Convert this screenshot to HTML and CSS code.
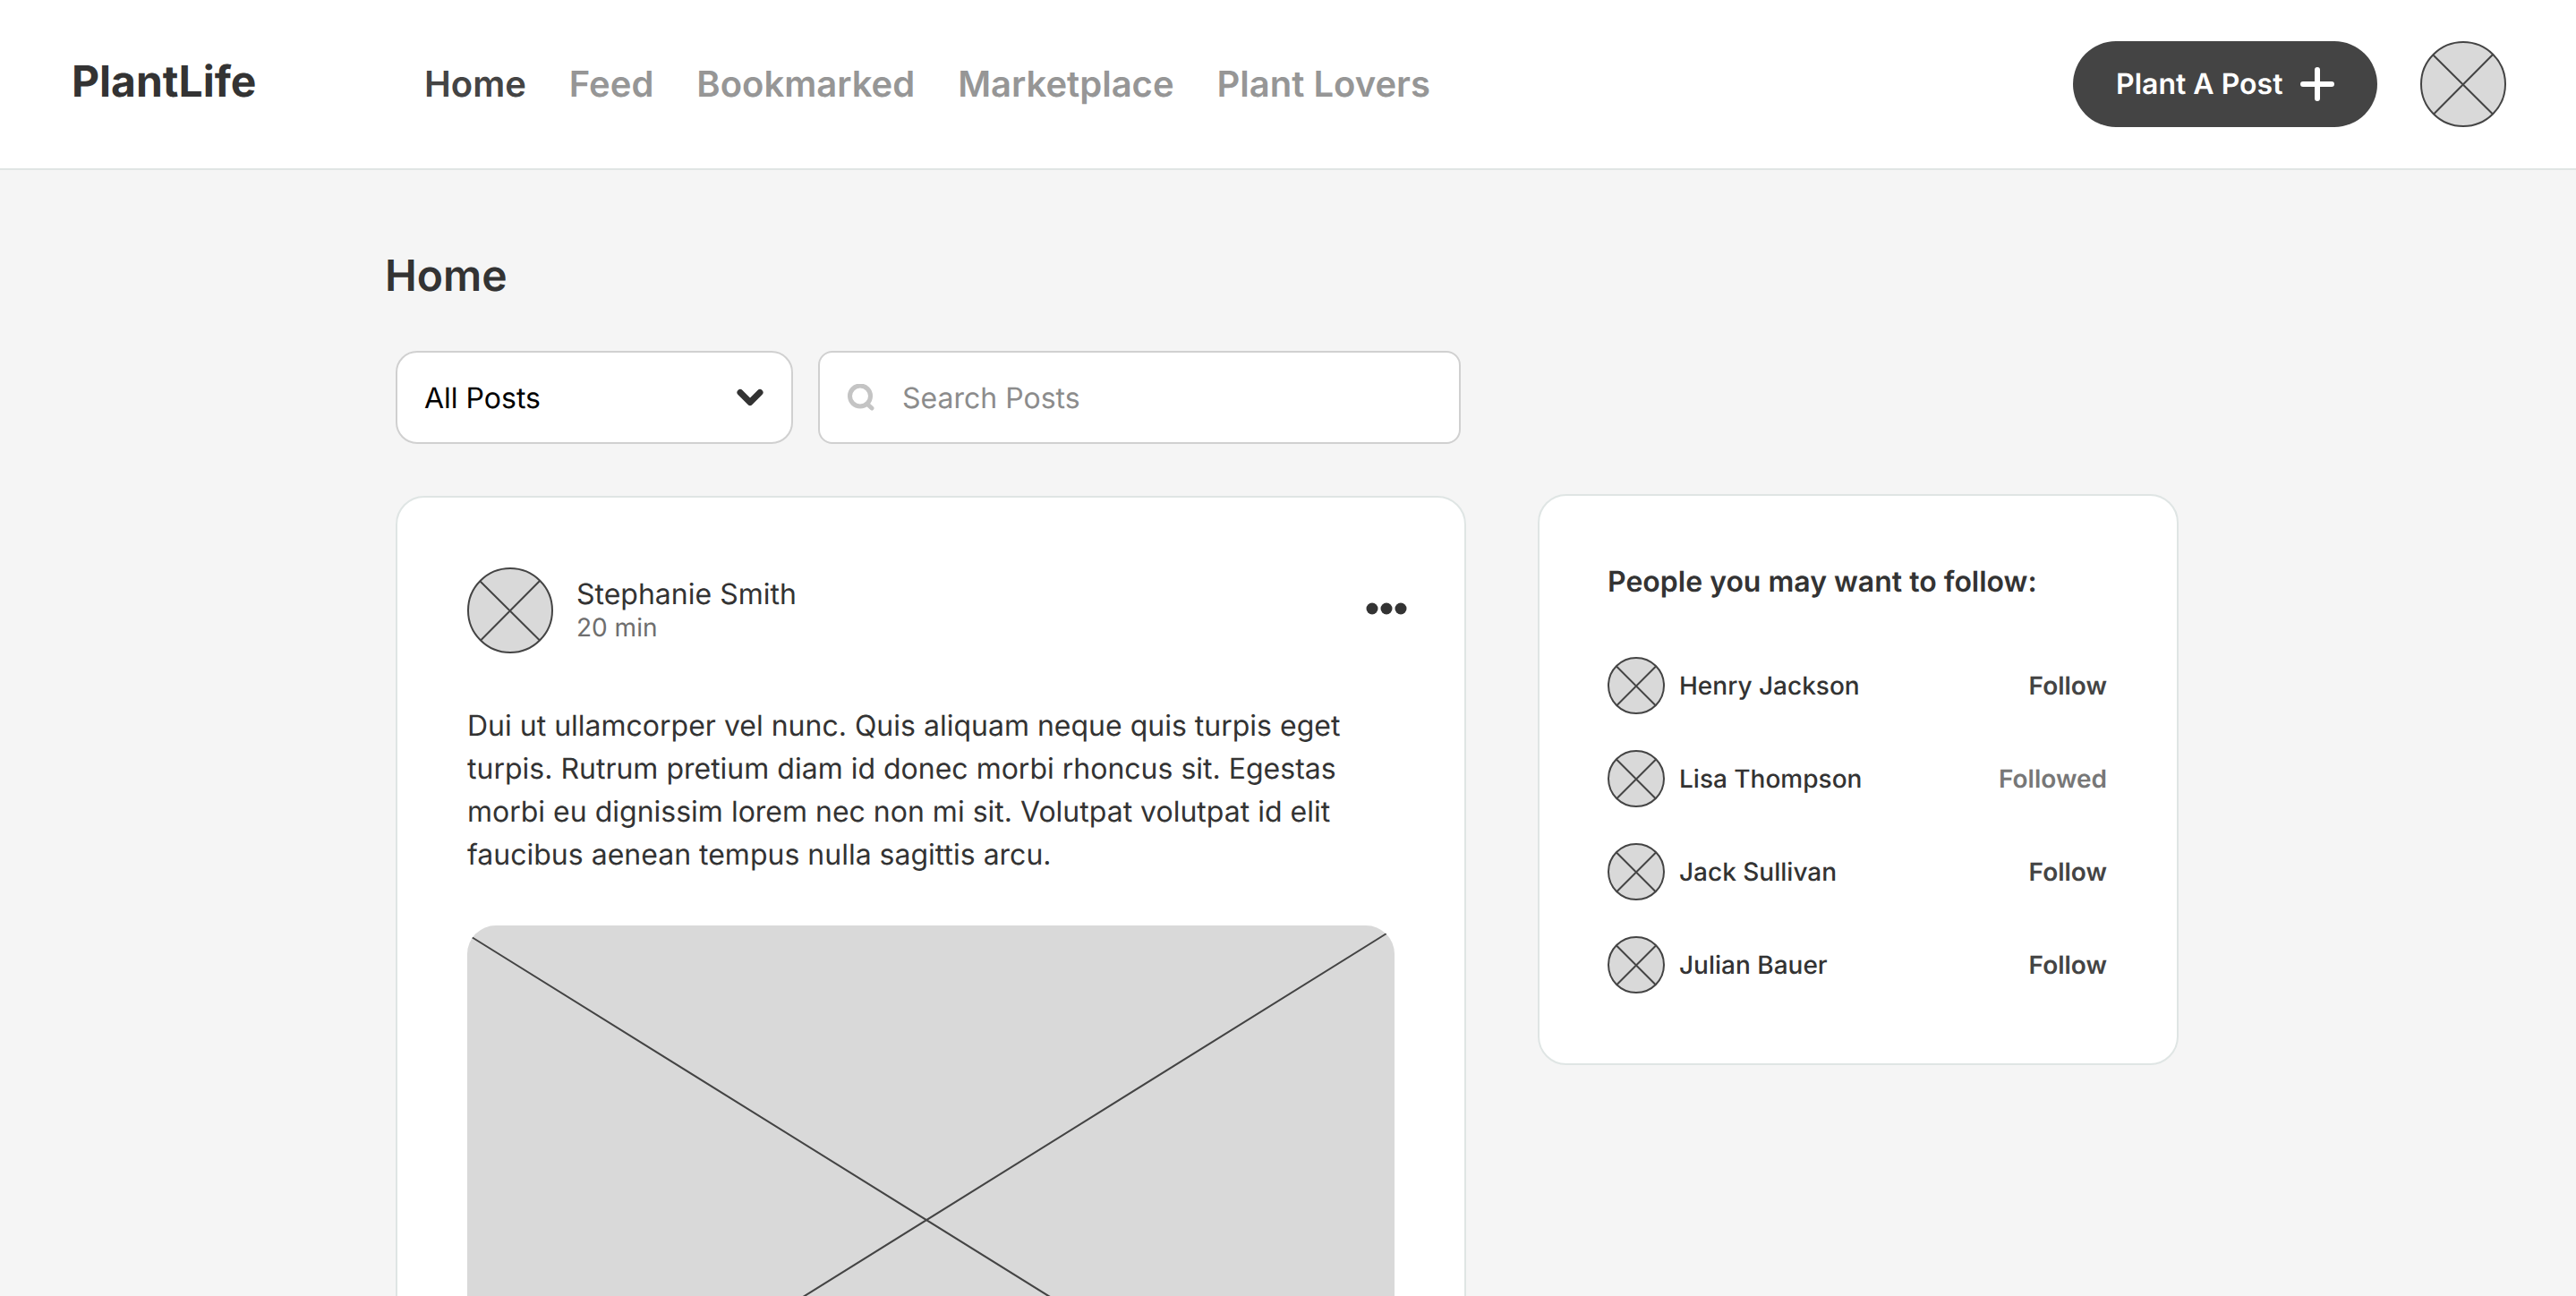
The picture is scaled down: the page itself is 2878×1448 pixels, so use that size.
FILE: index.html
```html
<!DOCTYPE html>
<html lang="en">
<head>
  <meta charset="utf-8">
  <meta name="viewport" content="width=device-width, initial-scale=1">
  <title>PlantLife – Home</title>
  <link rel="stylesheet" href="styles.css">
</head>
<body>
  <svg class="sprite" aria-hidden="true">
    <symbol id="avatar" viewBox="0 0 96 96">
      <circle cx="48" cy="48" r="47" />
      <path d="M14.500 15.500 81 81.500M81 15 15 81.500" />
    </symbol>
    <symbol id="avatar-small" viewBox="0 0 64 64">
      <circle cx="32" cy="32" r="31" />
      <path d="M10 10.500 54 54.500M54 10.500 10 54.500" />
    </symbol>
  </svg>

  <header class="topbar">
    <a class="logo" href="#">PlantLife</a>
    <nav class="nav" aria-label="Main">
      <a class="nav-link is-active" href="#" aria-current="page">Home</a>
      <a class="nav-link" href="#">Feed</a>
      <a class="nav-link" href="#">Bookmarked</a>
      <a class="nav-link" href="#">Marketplace</a>
      <a class="nav-link" href="#">Plant Lovers</a>
    </nav>
    <button class="post-button" type="button">
      Plant A Post
      <svg class="plus" viewBox="0 0 38 38" aria-hidden="true"><path d="M19 3V35M3 19H35" /></svg>
    </button>
    <a class="profile" href="#" aria-label="Your profile">
      <svg class="avatar"><use href="#avatar" /></svg>
    </a>
  </header>

  <main class="page">
    <h1 class="page-title">Home</h1>
    <div class="columns">
      <div class="feed">
        <form class="filters">
          <div class="filter-select">
            <select class="field" aria-label="Filter posts">
              <option>All Posts</option>
            </select>
            <svg class="chevron" viewBox="0 0 30 20" aria-hidden="true"><path d="M4 4.500 15 15.500 26 4.500" /></svg>
          </div>
          <div class="filter-search">
            <svg class="magnifier" viewBox="0 0 30 30" aria-hidden="true">
              <circle cx="14" cy="13.500" r="11.500" />
              <path d="M22 22.500 27 27" />
            </svg>
            <input class="field" type="search" placeholder="Search Posts" aria-label="Search posts">
          </div>
        </form>

        <article class="card post">
          <div class="post-header">
            <svg class="avatar" aria-hidden="true"><use href="#avatar" /></svg>
            <div class="byline">
              <h2 class="author">Stephanie Smith</h2>
              <p class="time">20 min</p>
            </div>
            <button class="more" type="button" aria-label="More options">
              <svg class="dots" viewBox="0 0 46 14" aria-hidden="true">
                <circle cx="7" cy="7" r="6.500" /><circle cx="23" cy="7" r="6.500" /><circle cx="39" cy="7" r="6.500" />
              </svg>
            </button>
          </div>
          <p class="post-text">Dui ut ullamcorper vel nunc. Quis aliquam neque quis turpis eget turpis. Rutrum pretium diam id donec morbi rhoncus sit. Egestas morbi eu dignissim lorem nec non mi sit. Volutpat volutpat id elit faucibus aenean tempus nulla sagittis arcu.</p>
          <svg class="post-image" viewBox="0 0 1036 656" role="img" aria-label="Post image">
            <path d="M5 13 1032 652M1027 9 6 645" />
          </svg>
        </article>
      </div>

      <aside class="card people">
        <h2 class="people-title">People you may want to follow:</h2>
        <ul class="people-list">
          <li class="person">
            <svg class="avatar-small" aria-hidden="true"><use href="#avatar-small" /></svg>
            <span class="person-name">Henry Jackson</span>
            <button class="follow" type="button">Follow</button>
          </li>
          <li class="person">
            <svg class="avatar-small" aria-hidden="true"><use href="#avatar-small" /></svg>
            <span class="person-name">Lisa Thompson</span>
            <button class="follow is-followed" type="button">Followed</button>
          </li>
          <li class="person">
            <svg class="avatar-small" aria-hidden="true"><use href="#avatar-small" /></svg>
            <span class="person-name">Jack Sullivan</span>
            <button class="follow" type="button">Follow</button>
          </li>
          <li class="person">
            <svg class="avatar-small" aria-hidden="true"><use href="#avatar-small" /></svg>
            <span class="person-name">Julian Bauer</span>
            <button class="follow" type="button">Follow</button>
          </li>
        </ul>
      </aside>
    </div>
  </main>
</body>
</html>
```
FILE: styles.css
```css
*,
*::before,
*::after {
  box-sizing: border-box;
}

body {
  margin: 0;
  background: #f5f5f5;
  color: #333;
  font-family: Inter, "Liberation Sans", sans-serif;
  font-size: 32px;
  line-height: 40px;
  text-rendering: geometricPrecision;
}

h1,
h2,
p,
ul {
  margin: 0;
  padding: 0;
}

a {
  color: inherit;
  text-decoration: none;
}

button {
  border: 0;
  padding: 0;
  background: none;
  color: inherit;
  font: inherit;
  text-rendering: inherit;
  cursor: pointer;
}

.sprite {
  display: none;
}

/* Top bar */

.topbar {
  display: flex;
  align-items: center;
  height: 190px;
  padding: 0 78px 0 80px;
  border-bottom: 2px solid #e0e5e4;
  background: #fff;
}

.logo {
  width: 394px;
  padding-bottom: 6px;
  font-size: 48px;
  font-weight: 700;
  line-height: 56px;
}

.nav {
  display: flex;
  flex: 1;
  gap: 48px;
  color: #969696;
  font-size: 40px;
  font-weight: 600;
  line-height: 48px;
}

.nav-link.is-active {
  color: #444;
}

.post-button {
  display: flex;
  align-items: center;
  justify-content: space-between;
  width: 340px;
  height: 96px;
  margin-right: 48px;
  padding: 0 48px;
  border-radius: 48px;
  background: #444;
  color: #fff;
  font-weight: 600;
}

.plus {
  width: 38px;
  height: 38px;
  fill: none;
  stroke: #fff;
  stroke-width: 6;
  stroke-linecap: round;
}

.profile {
  display: flex;
}

.avatar,
.avatar-small {
  flex: none;
  fill: #d9d9d9;
  stroke: #444;
  stroke-width: 2;
}

.avatar {
  width: 96px;
  height: 96px;
}

.avatar-small {
  width: 64px;
  height: 64px;
}

/* Page */

.page {
  max-width: 2018px;
  margin: 0 auto;
  padding-top: 90px;
}

.page-title {
  margin-bottom: 56px;
  font-size: 48px;
  font-weight: 600;
  line-height: 56px;
}

.columns {
  display: grid;
  grid-template-columns: minmax(0, 1fr) 716px;
  gap: 80px;
  align-items: start;
  margin: 0 14px 0 12px;
}

.filters {
  display: flex;
  gap: 28px;
  margin-bottom: 58px;
  padding-right: 6px;
}

.filter-select {
  position: relative;
  flex: 0 0 444px;
}

.filter-search {
  position: relative;
  flex: 1;
}

.field {
  display: block;
  width: 100%;
  height: 104px;
  margin: 0;
  padding: 0 30px;
  border: 2px solid #d0d0d0;
  border-radius: 24px;
  background: #fff;
  color: #000;
  font: inherit;
  text-rendering: inherit;
  appearance: none;
}

.filter-select .field {
  padding-top: 2px;
}

.filter-search .field {
  padding-left: 92px;
  border-radius: 16px;
}

.field::placeholder {
  color: #8c8c8c;
  opacity: 1;
}

.chevron {
  position: absolute;
  top: 42px;
  right: 33px;
  width: 30px;
  height: 20px;
  fill: none;
  stroke: #333;
  stroke-width: 7;
  stroke-linecap: round;
  stroke-linejoin: round;
  pointer-events: none;
}

.magnifier {
  position: absolute;
  top: 37px;
  left: 33px;
  width: 30px;
  height: 30px;
  fill: none;
  stroke: #c4c4c4;
  stroke-width: 5;
  stroke-linecap: round;
}

.card {
  border: 2px solid #dfe5e4;
  border-radius: 32px;
  background: #fff;
}

/* Post */

.post {
  padding: 78px;
}

.post-header {
  display: flex;
  align-items: center;
  margin-right: -14px;
}

.byline {
  flex: 1;
  margin-left: 26px;
}

.author {
  font-size: 32px;
  font-weight: 400;
  line-height: 38px;
}

.time {
  color: #6e6e6e;
  font-size: 28px;
  line-height: 36px;
}

.more,
.dots {
  display: block;
}

.more {
  padding-bottom: 4px;
}

.dots {
  width: 46px;
  height: 14px;
  fill: #333;
}

.post-text {
  margin: 57px 0 55px;
  line-height: 48px;
}

.post-image {
  display: block;
  width: 100%;
  border-radius: 32px;
  background: #d9d9d9;
  fill: none;
  stroke: #444;
  stroke-width: 2;
}

/* Suggestions */

.people {
  margin-top: 160px;
  padding: 76px 78px 78px 76px;
}

.people-title {
  margin-bottom: 64px;
  font-size: 32px;
  font-weight: 600;
}

.people-list {
  display: grid;
  gap: 40px;
  list-style: none;
}

.person {
  display: flex;
  align-items: center;
  gap: 16px;
  font-size: 28px;
}

.person-name {
  flex: 1;
  font-weight: 500;
}

.follow {
  color: #444;
  font-weight: 600;
}

.follow.is-followed {
  color: #777;
}
```
